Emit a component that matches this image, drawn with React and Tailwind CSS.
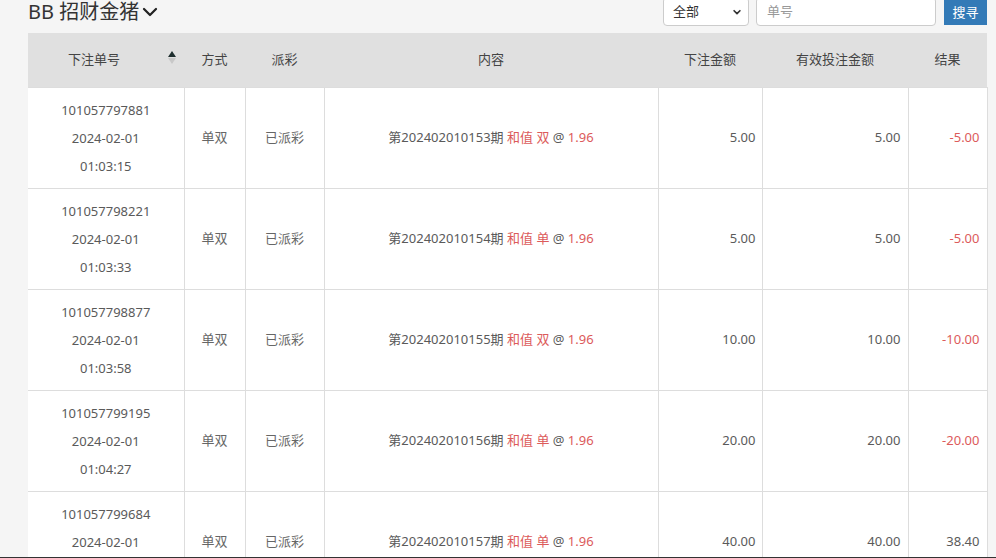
import React from "react";

const rows = [
  { id: "101057797881", date: "2024-02-01", time: "01:03:15", issue: "202402010153", pick: "双", amt: "5.00", valid: "5.00", res: "-5.00" },
  { id: "101057798221", date: "2024-02-01", time: "01:03:33", issue: "202402010154", pick: "单", amt: "5.00", valid: "5.00", res: "-5.00" },
  { id: "101057798877", date: "2024-02-01", time: "01:03:58", issue: "202402010155", pick: "双", amt: "10.00", valid: "10.00", res: "-10.00" },
  { id: "101057799195", date: "2024-02-01", time: "01:04:27", issue: "202402010156", pick: "单", amt: "20.00", valid: "20.00", res: "-20.00" },
  { id: "101057799684", date: "2024-02-01", time: "01:04:51", issue: "202402010157", pick: "单", amt: "40.00", valid: "40.00", res: "38.40" },
];

const font = { fontFamily: '"Noto Sans", "Noto Sans CJK SC", sans-serif' };

export default function App() {
  return (
    <div className="h-[558px] w-[996px] overflow-hidden bg-[#f5f5f5] text-[#5a5a5a] relative" style={font}>
      <div className="flex items-start justify-between pl-[28px] pr-[9px] h-[26px]">
        <div className="flex items-center gap-[2px] text-[20px] leading-[24px] text-[#333]">
          <span>BB 招财金猪</span>
          <svg width="18" height="18" viewBox="0 0 24 24" fill="none" stroke="#222" strokeWidth="3" strokeLinecap="round" strokeLinejoin="round">
            <path d="M4 8l8 8 8-8" />
          </svg>
        </div>
        <div className="flex items-start -mt-[3px]">
          <div className="w-[86px] h-[29px] border border-[#ccc] rounded-[4px] bg-white flex items-center justify-between pl-[9px] pr-[6px] text-[13px] text-[#333]">
            <span>全部</span>
            <svg width="10" height="10" viewBox="0 0 24 24" fill="none" stroke="#333" strokeWidth="4" strokeLinecap="round" strokeLinejoin="round">
              <path d="M5 9l7 7 7-7" />
            </svg>
          </div>
          <div className="ml-[7px] w-[180px] h-[29px] border border-[#ccc] rounded-[4px] bg-white flex items-center pl-[10px] text-[13px] text-[#999]">
            单号
          </div>
          <div className="ml-[8px] w-[43px] h-[28px] bg-[#337ab7] text-white text-[13px] flex items-center justify-center pt-[3px]">
            搜寻
          </div>
        </div>
      </div>
      <div className="mt-[7px] ml-[28px] w-[959px]">
        <table className="w-full border-collapse table-fixed text-[13px]">
          <colgroup>
            <col className="w-[156px]" />
            <col className="w-[61px]" />
            <col className="w-[79px]" />
            <col className="w-[334px]" />
            <col className="w-[104px]" />
            <col className="w-[146px]" />
            <col className="w-[79px]" />
          </colgroup>
          <thead>
            <tr className="h-[54px] bg-[#e0e0e0] text-[#444] text-[13px]">
              <th className="font-normal relative">
                <span className="pr-[24px]">下注单号</span>
                <span className="absolute right-[8px] top-[18px] flex flex-col items-center">
                  <svg width="8" height="6" viewBox="0 0 8 6"><path d="M4 0L8 6H0z" fill="#1f2f2f" /></svg>
                  <svg width="8" height="6" viewBox="0 0 8 6" className="mt-[1px]"><path d="M0 0h8L4 6z" fill="#c8c8c8" /></svg>
                </span>
              </th>
              <th className="font-normal">方式</th>
              <th className="font-normal">派彩</th>
              <th className="font-normal">内容</th>
              <th className="font-normal">下注金额</th>
              <th className="font-normal">有效投注金额</th>
              <th className="font-normal">结果</th>
            </tr>
          </thead>
          <tbody className="bg-white">
            {rows.map((r) => (
              <tr key={r.id} className="h-[101px]">
                <td className="border border-[#ddd] border-l-0 text-center leading-[28px] py-[7px]">
                  <div>{r.id}</div>
                  <div>{r.date}</div>
                  <div>{r.time}</div>
                </td>
                <td className="border border-[#ddd] text-center text-[#666]">单双</td>
                <td className="border border-[#ddd] text-center text-[#666]">已派彩</td>
                <td className="border border-[#ddd] text-center">
                  第{r.issue}期 <span className="text-[#dc5b5b]">和值 {r.pick}</span> @ <span className="text-[#dc5b5b]">1.96</span>
                </td>
                <td className="border border-[#ddd] text-right pr-[6px]">{r.amt}</td>
                <td className="border border-[#ddd] text-right pr-[7px]">{r.valid}</td>
                <td className={"border border-[#ddd] text-right pr-[7px] " + (r.res.startsWith("-") ? "text-[#dc5b5b]" : "text-[#5a5a5a]")}>{r.res}</td>
              </tr>
            ))}
          </tbody>
        </table>
      </div>
      <div className="absolute left-0 right-0 bottom-0 h-[1px] bg-[#333]" />
    </div>
  );
}
